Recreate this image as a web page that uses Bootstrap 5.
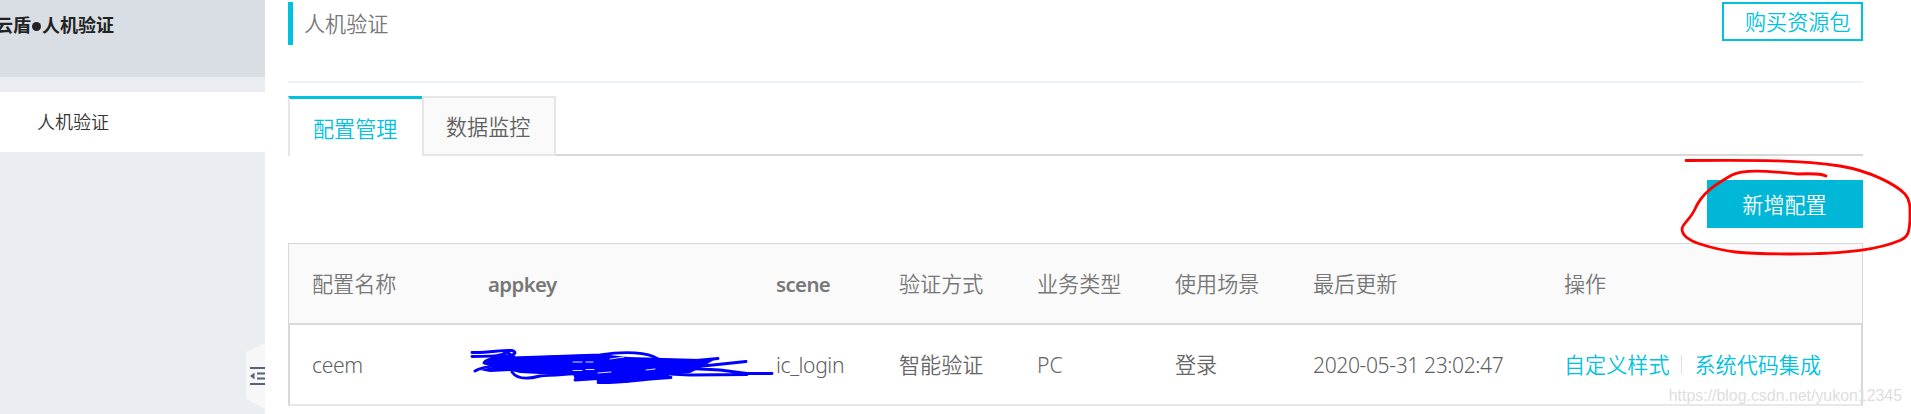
<!DOCTYPE html>
<html lang="zh-CN">
<head>
<meta charset="utf-8">
<title>人机验证</title>
<link rel="stylesheet" href="https://cdn.jsdelivr.net/npm/bootstrap@5.3.0/dist/css/bootstrap.min.css">
<style>
:root{--accent:#00c1de}
body{font-family:"Noto Sans","Noto Sans CJK SC",sans-serif;font-size:21.1px;line-height:28px;color:#606060;height:414px;overflow:hidden;font-weight:350}
a{color:var(--accent);text-decoration:none}
.sidebar{width:265px;background:#eaedf1}
.brand{height:77px;background:#d9dde4;margin-bottom:15px;padding-top:10px;font:700 18px/28px "Noto Sans CJK SC",sans-serif;color:#222;white-space:nowrap}
.brand span{display:inline-block;margin-left:-5px}
.brand i{display:inline-block;width:9px;height:9px;border-radius:50%;background:#222;margin:0 1px 1px;vertical-align:middle}
.side-item{height:60px;background:#fff;padding-left:37px;font-size:18px;color:#333}
.fold{left:246px;top:343px}
.main-area{padding:2px 48px 0 23px}
.head{height:81px;border-bottom:2px solid #ecf1f7}
.head-title{border-left:5px solid var(--accent);height:43px;padding:8px 0 0 11px;color:#777}
.buy{width:141px;height:39px;border:2px solid var(--accent);padding:4px 0 0 21px}
.tabs{margin-top:13px;height:60px;border-bottom:2px solid #d8d8d8}
.tab-a{width:134px;height:60px;border-top:3px solid var(--accent);border-left:2px solid #e6e6e6;background:#fff;padding:16px 0 0 23px;color:var(--accent)}
.tab-b{width:134px;height:60px;border:2px solid #e6e6e6;background:#fafafa;padding:15px 0 0 22px}
.add{width:156px;height:48px;background:#00b7d8;color:#fff;margin-top:24px;border:0;border-radius:0;padding:1px 1px 0 0;font-size:21.1px;font-weight:350}
.grid-table{margin-top:15px;table-layout:fixed;width:1575px;border-collapse:separate;border-spacing:0}
.grid-table th,.grid-table td{padding:0;vertical-align:middle;font-weight:350;white-space:nowrap}
.grid-table th{height:82px;background:#fafafa;border-top:1px solid #d8d8d8;border-bottom:2px solid #d8d8d8;color:#777}
.grid-table td{height:81px;border-bottom:2px solid #e8e8e8;color:#666}
.grid-table th:first-child{border-left:1px solid #d8d8d8;padding-left:23px}
.grid-table td:first-child{border-left:2px solid #d8d8d8;padding-left:22px}
.grid-table th:last-child{border-right:1px solid #d8d8d8}
.grid-table td:last-child{border-right:2px solid #d8d8d8}
.grid-table th.latin{font-weight:600;letter-spacing:-.6px;font-size:20.4px}
.grid-table td.latin{letter-spacing:-.4px;color:#606060}
.grid-table .name{letter-spacing:-.6px}
.grid-table .scene{letter-spacing:-.1px}
.sep{width:1px;height:19px;background:#e0e0e0;margin:0 12px}
.ink{left:0;top:0;pointer-events:none}
.wm{right:9px;bottom:7px;font:15.9px/22px "Liberation Sans",sans-serif;color:#dedede}
</style>
</head>
<body>
<div class="d-flex h-100 position-relative bg-white">
  <aside class="sidebar flex-shrink-0">
    <div class="brand"><span>云盾<i></i>人机验证</span></div>
    <div class="side-item d-flex align-items-center">人机验证</div>
    <svg class="fold position-absolute" width="19" height="66" viewBox="0 0 19 66"><path d="M19 0 0 9v47l19 10z" fill="#f7f7f7"/><path d="M4 25h15M11 30.500h8M11 35.500h8M4 41h15" stroke="#546478" stroke-width="2"/><path d="M8.500 29.500v7l-4.500-3.500z" fill="#546478"/></svg>
  </aside>
  <main class="main-area flex-grow-1">
    <div class="head d-flex justify-content-between align-items-start">
      <div class="head-title">人机验证</div>
      <a class="buy" href="#">购买资源包</a>
    </div>
    <div class="tabs d-flex">
      <div class="tab-a">配置管理</div>
      <div class="tab-b">数据监控</div>
    </div>
    <div class="d-flex justify-content-end"><button class="btn add">新增配置</button></div>
    <table class="grid-table">
      <colgroup><col style="width:200px"><col style="width:288px"><col style="width:123px"><col style="width:138px"><col style="width:138px"><col style="width:138px"><col style="width:251px"><col></colgroup>
      <thead><tr><th>配置名称</th><th class="latin">appkey</th><th class="latin">scene</th><th>验证方式</th><th>业务类型</th><th>使用场景</th><th>最后更新</th><th>操作</th></tr></thead>
      <tbody><tr><td class="latin name">ceem</td><td></td><td class="latin scene">ic_login</td><td>智能验证</td><td>PC</td><td>登录</td><td class="latin">2020-05-31 23:02:47</td><td><div class="d-flex align-items-center"><a href="#">自定义样式</a><span class="sep"></span><a href="#">系统代码集成</a></div></td></tr></tbody>
    </table>
  </main>
  <svg class="ink position-absolute" width="1911" height="414" viewBox="0 0 1911 414" fill="none" stroke-linecap="round" stroke-linejoin="round">
    <path d="M1686 160.500C1760 160 1800 160 1840 166C1870 171 1895 184 1905 194C1911 201 1910 209 1910 220C1909 231 1909 236 1901 240C1880 249 1850 254 1790 254C1740 254 1725 252 1700 244C1688 240 1682 235 1682 229C1682 224 1690 220 1695 209C1702 192 1718 183 1732 175C1745 168 1775 172 1798 174Q1820 173 1826 176" stroke="#f00" stroke-width="2.800"/>
    <path fill="#00f" d="M514 357L600 354L628 357L700 359L706 361L717 358L704 366L690 373L668 374L671 378L640 380L625 383L600 383L596 380L575 380L573 374L540 374L520 373L512 371L490 372L480 370L496 366L484 363L490 360L502 357Z"/>
    <g stroke="#00f" stroke-width="2.900">
      <path d="M472 352.500C490 353 502 349.500 512 350.500C518 352 514 356 507 356C503 355 505 352 508 350.500M472 356.500C490 356 500 357 507 352L514 357M508 356C498 358 485 359 484 363C488 365 500 363 508 364M475 371C483 366 495 366 506 364"/>
      <path d="M512 372C516 378 525 380 540 376C555 375 575 374 590 372M514 358L600 355C625 351 648 352 658 359M575 380L620 377M598 382.500C625 383 640 379 671 377.500"/>
      <path d="M600 364L680 362L718 358.500M650 371L694 367L746 361.500M660 367L720 370L747 373.500H772M650 373L690 375L747 374.500"/>
    </g>
    <path d="M573 362h9m4 0h7M573 370.500h9m4-1h8M610 359l14-2M646 370l9-1M598 373l13-1" stroke="#dfe2ff" stroke-width="1"/>
  </svg>
  <div class="wm position-absolute">https://blog.csdn.net/yukon12345</div>
</div>
<script src="https://cdn.jsdelivr.net/npm/bootstrap@5.3.0/dist/js/bootstrap.bundle.min.js"></script>
</body>
</html>
